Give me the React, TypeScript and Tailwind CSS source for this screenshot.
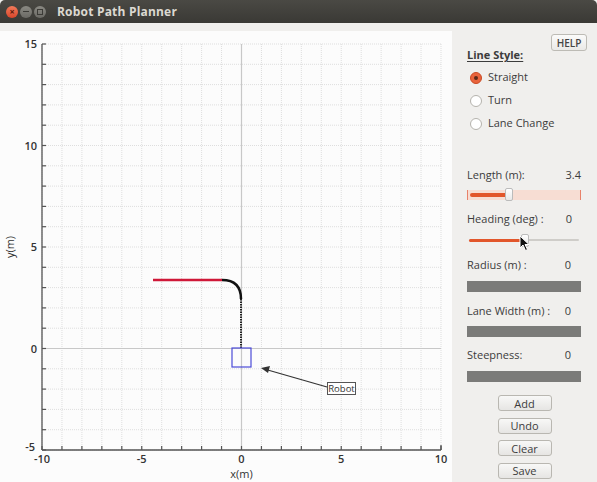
import React from 'react';

// plot geometry (page pixel coords)
const X0 = 42;
const X1 = 441;
const Y_TOP = 44;
const Y_BOT = 450;
const px = (x: number) => X0 + ((x + 10) / 20) * (X1 - X0);
const py = (y: number) => Y_BOT - ((y + 5) / 20) * (Y_BOT - Y_TOP);

const PlotArea = () => {
  const xs = Array.from({ length: 21 }, (_, i) => i - 10);
  const ys = Array.from({ length: 21 }, (_, i) => i - 5);
  return (
    <svg width={452} height={451} viewBox="0 31 452 451" className="block">
      <rect x={0} y={31} width={452} height={451} fill="#fcfcfc" />
      {/* grid */}
      {xs.map((x) => (
        <line key={'gx' + x} x1={px(x)} y1={Y_TOP} x2={px(x)} y2={Y_BOT} stroke="#dedede" strokeWidth={1} strokeDasharray="1 1" />
      ))}
      {ys.map((y) => (
        <line key={'gy' + y} x1={X0} y1={py(y)} x2={X1} y2={py(y)} stroke="#dedede" strokeWidth={1} strokeDasharray="1 1" />
      ))}
      {/* zero lines */}
      <line x1={px(0)} y1={Y_TOP} x2={px(0)} y2={Y_BOT} stroke="#c8c8c8" strokeWidth={1.2} />
      <line x1={X0} y1={py(0)} x2={X1} y2={py(0)} stroke="#c8c8c8" strokeWidth={1.2} />
      {/* axes */}
      <line x1={X0} y1={Y_TOP} x2={X0} y2={Y_BOT} stroke="#555" strokeWidth={1.3} />
      <line x1={X0} y1={Y_BOT} x2={X1} y2={Y_BOT} stroke="#555" strokeWidth={1.3} />
      <line x1={X1} y1={Y_BOT} x2={X1} y2={Y_BOT - 5} stroke="#555" strokeWidth={1.3} />
      {ys.map((y) => (
        <line key={'ty' + y} x1={X0} y1={py(y)} x2={X0 + 4} y2={py(y)} stroke="#555" strokeWidth={1.2} />
      ))}
      {xs.map((x) => (
        <line key={'tx' + x} x1={px(x)} y1={Y_BOT} x2={px(x)} y2={Y_BOT - 4} stroke="#555" strokeWidth={1.2} />
      ))}
      {/* tick labels */}
      <g fontFamily="'Open Sans', 'DejaVu Sans', sans-serif" fontSize={11} fill="#333" fontWeight={600}>
        {[15, 10, 5, 0].map((v) => (
          <text key={'ly' + v} x={37} y={py(v) + 4} textAnchor="end">{v}</text>
        ))}
        <text x={35} y={py(-5) + 1} textAnchor="end">-5</text>
        {[-10, -5, 0, 5, 10].map((v) => (
          <text key={'lx' + v} x={px(v)} y={463} textAnchor="middle">{v}</text>
        ))}
        <text x={px(0)} y={478} textAnchor="middle" fontWeight={500}>x(m)</text>
        <text x={0} y={0} textAnchor="middle" fontWeight={500} transform={`translate(14 ${py(5)}) rotate(-90)`}>y(m)</text>
      </g>
      {/* planned path */}
      <line x1={153} y1={280} x2={222} y2={280} stroke="#cf1838" strokeWidth={2.5} />
      <path d="M222 280 Q241 280 241 299" fill="none" stroke="#111" strokeWidth={2.5} />
      <line x1={241} y1={299} x2={241} y2={348} stroke="#222" strokeWidth={2} strokeDasharray="1.5 1" />
      {/* robot */}
      <rect x={232} y={348} width={19} height={19} fill="none" stroke="#4b4bd8" strokeWidth={1.2} />
      <line x1={327} y1={387} x2={266} y2={369.5} stroke="#333" strokeWidth={1.2} />
      <polygon points="261,368 270,366 268,373" fill="#333" />
      <rect x={327.5} y={382.5} width={28} height={12} fill="#fff" stroke="#555" strokeWidth={1} />
      <text x={341.5} y={392} textAnchor="middle" fontFamily="'Open Sans', 'DejaVu Sans', sans-serif" fontSize={9.5} fill="#333">Robot</text>
    </svg>
  );
};

const Radio = ({ label, checked }: { label: string; checked?: boolean }) => (
  <div className="flex items-center gap-[6px] h-[23px]">
    {checked ? (
      <span className="w-[12px] h-[12px] rounded-full bg-[#e9643c] border border-[#c94a24] flex items-center justify-center">
        <span className="w-[4px] h-[4px] rounded-full bg-[#5a2a1a]" />
      </span>
    ) : (
      <span className="w-[12px] h-[12px] rounded-full bg-white border border-[#b5b3ad]" />
    )}
    <span>{label}</span>
  </div>
);

const ValueRow = ({ label, value, valueRight = 'pr-[7px]' }: { label: string; value: string; valueRight?: string }) => (
  <div className={`flex justify-between items-center h-[16px] ${valueRight}`}>
    <span>{label}</span>
    <span>{value}</span>
  </div>
);

const Btn = ({ label }: { label: string }) => (
  <button className="w-[54px] h-[16px] mx-auto flex items-center justify-center rounded-[3px] border border-[#b9b7b1] bg-gradient-to-b from-[#f8f8f7] to-[#e6e5e3] text-[11px] text-[#3c3c3c] leading-none">
    {label}
  </button>
);

const ControlPanel = () => (
  <div className="flex-1 flex flex-col pl-[15px] pr-[16px] text-[11px] text-[#3c3c3c] relative">
    <button className="absolute right-[10px] top-[3px] w-[36px] h-[17px] rounded-[3px] border border-[#bdbbb5] bg-gradient-to-b from-[#fbfbfa] to-[#eae9e7] text-[10px] font-semibold text-[#444] leading-none">
      HELP
    </button>
    <div className="mt-[16px] font-bold underline underline-offset-2 h-[16px] leading-[16px]">Line Style:</div>
    <div className="mt-[3px] pl-[3px]">
      <Radio label="Straight" checked />
      <Radio label="Turn" />
      <Radio label="Lane Change" />
    </div>

    <div className="mt-[32px]">
      <ValueRow label="Length (m):" value="3.4" valueRight="pr-0" />
    </div>
    {/* length slider */}
    <div className="mt-[7px] h-[10px] relative border-x border-[#e8826a] bg-[#f7ddd3] flex items-center">
      <div className="ml-[2px] w-[37px] h-[4px] rounded-full bg-[#e2562b]" />
      <div className="absolute left-[37px] top-[-2px] w-[8px] h-[13px] rounded-[2px] border border-[#bbb] bg-gradient-to-b from-white to-[#e8e8e8]" />
    </div>

    <div className="mt-[11px]">
      <ValueRow label="Heading (deg) :" value="0" valueRight="pr-[9px]" />
    </div>
    {/* heading slider */}
    <div className="mt-[7px] h-[12px] relative flex items-center">
      <div className="absolute left-[2px] right-[2px] h-[2px] bg-[#cfcdc9] rounded-full" />
      <div className="absolute left-[2px] w-[54px] h-[3px] rounded-full bg-[#e2562b]" />
      <div className="absolute left-[54px] top-0 w-[8px] h-[13px] rounded-[2px] border border-[#bbb] bg-gradient-to-b from-white to-[#e8e8e8]" />
      <svg className="absolute left-[52px] top-[1px]" width={12} height={17} viewBox="0 0 12 17">
        <path d="M1 1 L1 13 L4 10 L6.5 15.5 L8.5 14.5 L6 9.5 L10 9.5 Z" fill="#111" stroke="#fff" strokeWidth={1} />
      </svg>
    </div>

    <div className="mt-[11px]">
      <ValueRow label="Radius (m) :" value="0" valueRight="pr-[10px]" />
    </div>
    <div className="mt-[8px] h-[11px] bg-[#7b7b79]" />

    <div className="mt-[11px]">
      <ValueRow label="Lane Width (m) :" value="0" valueRight="pr-[10px]" />
    </div>
    <div className="mt-[7px] h-[11px] bg-[#7b7b79]" />

    <div className="mt-[10px]">
      <ValueRow label="Steepness:" value="0" valueRight="pr-[10px]" />
    </div>
    <div className="mt-[8px] h-[11px] bg-[#7b7b79]" />

    <div className="mt-[13px] flex flex-col gap-[6.5px] pl-[1px]">
      <Btn label="Add" />
      <Btn label="Undo" />
      <Btn label="Clear" />
      <Btn label="Save" />
    </div>
  </div>
);

export default function App() {
  return (
    <div className="w-[597px] h-[482px] overflow-hidden bg-[#f0efed] flex flex-col" style={{ fontFamily: "'Open Sans', 'DejaVu Sans', sans-serif" }}>
      {/* title bar */}
      <div className="h-[23px] shrink-0 bg-gradient-to-b from-[#4a4944] to-[#3a3935] flex items-center pl-[6px] gap-[2px] rounded-t-[5px]">
        <span className="w-[12px] h-[12px] rounded-full bg-gradient-to-b from-[#f27a5a] to-[#d9452a] flex items-center justify-center text-[9px] font-bold text-[#5a1a0c] leading-none">×</span>
        <span className="w-[12px] h-[12px] rounded-full bg-gradient-to-b from-[#8a8983] to-[#6b6a65] flex items-center justify-center">
          <span className="w-[6px] h-[1.5px] bg-[#3c3b37]" />
        </span>
        <span className="w-[12px] h-[12px] rounded-full bg-gradient-to-b from-[#8a8983] to-[#6b6a65] flex items-center justify-center">
          <span className="w-[6px] h-[6px] border border-[#3c3b37]" />
        </span>
        <span className="ml-[9px] text-[12px] font-bold text-[#dcd9d1] tracking-[0.2px]">Robot Path Planner</span>
      </div>
      <div className="flex-1 flex pt-[8px]">
        <div className="w-[452px] shrink-0">
          <PlotArea />
        </div>
        <ControlPanel />
      </div>
    </div>
  );
}
